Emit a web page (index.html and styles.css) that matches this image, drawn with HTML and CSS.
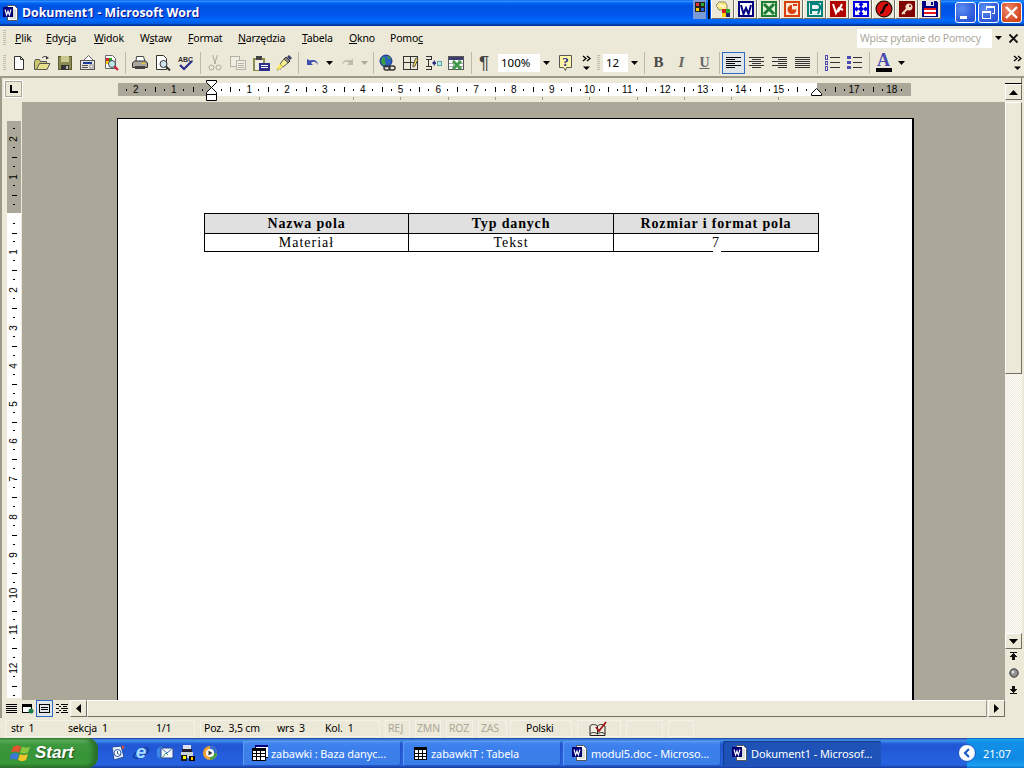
FILE: index.html
```html
<!DOCTYPE html>
<html lang="pl">
<head>
<meta charset="utf-8">
<title>Dokument1 - Microsoft Word</title>
<link rel="stylesheet" href="styles.css">
</head>
<body>
<svg class="sprite" width="0" height="0">
  <defs>
    <symbol id="doc-w" viewBox="0 0 16 16">
      <path d="M4.500.5h7l3 3v12h-10z" fill="#fff" stroke="#555"/><path d="M7 5h6M7 7h6M7 9h6M7 11h6M7 13h6" stroke="#bbb"/>
      <rect x=".5" y="2.500" width="9" height="9" fill="#000080" stroke="#000060"/>
      <path d="M2 4.500l1.600 5.500 1.400-4 1.400 4L8 4.500" fill="none" stroke="#fff" stroke-width="1.100"/>
    </symbol>
    <symbol id="arr-d" viewBox="0 0 7 4"><path d="M0 0h7L3.500 4z" fill="#000"/></symbol>
    <symbol id="arr-dg" viewBox="0 0 7 4"><path d="M0 0h7L3.500 4z" fill="#aca899"/></symbol>
    <symbol id="chev" viewBox="0 0 9 15"><path d="M1 1l3 2.500-3 2.500M5 1l3 2.500-3 2.500" fill="none" stroke="#000" stroke-width="1.300"/><path d="M1 11.500h7L4.500 15z" fill="#000"/></symbol>
  </defs>
</svg>
<div class="app">
  <header class="titlebar">
    <svg class="title-icon" width="16" height="16"><use href="#doc-w"/></svg>
    <span class="title-text">Dokument1 - Microsoft Word</span>
    <div class="ql-strip">
      <div class="ql-grip"><svg width="12" height="12" viewBox="0 0 12 12" shape-rendering="crispEdges"><rect x="1" y="1" width="10" height="10" fill="#222"/><rect x="2" y="2" width="3" height="3" fill="#e33"/><rect x="7" y="2" width="3" height="3" fill="#3a3"/><rect x="2" y="7" width="3" height="3" fill="#fc0"/><rect x="7" y="7" width="3" height="3" fill="#26d"/></svg></div>
      <div class="ql-bar"></div>
      <button class="ql-btn"><svg width="18" height="18" viewBox="0 0 18 18"><path d="M2 5l3-3h6l2 3v5H5z" fill="#ffe96e" stroke="#887"/><path d="M3 6h9M5 3l6 6" stroke="#fff"/><rect x="8" y="9" width="4" height="4" fill="#c22"/><rect x="12" y="9" width="4" height="4" fill="#2a2"/><rect x="8" y="13" width="4" height="4" fill="#fc0"/><rect x="12" y="13" width="4" height="4" fill="#227"/></svg></button>
      <button class="ql-btn"><svg width="18" height="18" viewBox="0 0 18 18" shape-rendering="crispEdges"><rect x="1" y="1" width="16" height="16" fill="#000080"/><rect x="3" y="3" width="12" height="12" fill="#fff"/><path d="M4 5l2.500 9 2.500-6 2.500 6L14 5" fill="none" stroke="#000080" stroke-width="2" shape-rendering="auto"/></svg></button>
      <button class="ql-btn"><svg width="18" height="18" viewBox="0 0 18 18" shape-rendering="crispEdges"><rect x="1" y="1" width="16" height="16" fill="#1e7d32"/><rect x="3" y="3" width="12" height="12" fill="#dff0d8"/><path d="M4 4l10 10M14 4L4 14" stroke="#1e7d32" stroke-width="3" shape-rendering="auto"/></svg></button>
      <button class="ql-btn"><svg width="18" height="18" viewBox="0 0 18 18" shape-rendering="crispEdges"><rect x="1" y="1" width="16" height="16" fill="#d9410b"/><rect x="3" y="3" width="12" height="12" fill="#ffe8d8"/><path d="M9 5a4.500 4.500 0 1 0 4.500 4.500H9z" fill="#d9410b" shape-rendering="auto"/><rect x="10" y="4" width="4" height="2" fill="#d9410b"/></svg></button>
      <button class="ql-btn"><svg width="18" height="18" viewBox="0 0 18 18" shape-rendering="crispEdges"><rect x="1" y="1" width="16" height="16" fill="#00807a"/><rect x="3" y="3" width="12" height="12" fill="#e8f4f0"/><path d="M5 14V4h6a3 3 0 0 1 0 6H5M12 14l3-8" fill="none" stroke="#00807a" stroke-width="2" shape-rendering="auto"/></svg></button>
      <button class="ql-btn"><svg width="18" height="18" viewBox="0 0 18 18" shape-rendering="crispEdges"><rect x="1" y="1" width="16" height="16" fill="#b00000"/><path d="M4 4l3 9 3-5 4 2M13 4l-4 8" fill="none" stroke="#fff" stroke-width="2" shape-rendering="auto"/></svg></button>
      <button class="ql-btn"><svg width="18" height="18" viewBox="0 0 18 18"><rect x="1" y="1" width="16" height="16" fill="#0000e0"/><path d="M3 3h5L6.500 4.500l2 2-2 2-2-2L3 8zM15 15h-5l1.500-1.500-2-2 2-2 2 2L15 10zM15 3v5l-1.500-1.500-2 2-2-2 2-2L10 3zM3 15v-5l1.500 1.500 2-2 2 2-2 2L8 15z" fill="#fff"/></svg></button>
      <button class="ql-btn"><svg width="18" height="18" viewBox="0 0 18 18"><circle cx="9" cy="9" r="8.500" fill="#000"/><circle cx="9" cy="9" r="7.500" fill="#d81010"/><path d="M5 13c3 0 3-2 4-5s2-3.500 4-3.500" fill="none" stroke="#000" stroke-width="2"/></svg></button>
      <button class="ql-btn"><svg width="18" height="18" viewBox="0 0 18 18"><rect x="1" y="1" width="16" height="16" fill="#800000"/><path d="M4 14l5-5" stroke="#f2dcc4" stroke-width="2"/><path d="M5 12l2 2" stroke="#f2dcc4" stroke-width="1.500"/><circle cx="11" cy="7" r="3.500" fill="#f2dcc4"/><circle cx="12" cy="6" r="1" fill="#800000"/></svg></button>
      <button class="ql-btn"><svg width="18" height="18" viewBox="0 0 18 18" shape-rendering="crispEdges"><path d="M1 1h14l2 2v14H1z" fill="#000080"/><rect x="5" y="1" width="8" height="5" fill="#e0e0f0"/><rect x="10" y="2" width="2" height="3" fill="#000080"/><rect x="3" y="8" width="12" height="2" fill="#e81818"/><rect x="3" y="10" width="12" height="2" fill="#fff"/><rect x="3" y="12" width="12" height="2" fill="#e81818"/><rect x="3" y="14" width="12" height="2" fill="#fff"/></svg></button>
    </div>
    <div class="win-buttons">
      <button class="win-btn"><svg width="21" height="21" viewBox="0 0 21 21" shape-rendering="crispEdges"><rect x="5" y="14" width="7" height="3" fill="#fff"/></svg></button>
      <button class="win-btn"><svg width="21" height="21" viewBox="0 0 21 21" fill="none" stroke="#fff" shape-rendering="crispEdges"><path d="M8.500 7.500V4.500h8v7h-3" stroke-width="1"/><path d="M8 5h8" stroke-width="2"/><rect x="4.500" y="9.500" width="8" height="7"/><path d="M4 10h9" stroke-width="2"/></svg></button>
      <button class="win-btn win-close"><svg width="21" height="21" viewBox="0 0 21 21"><path d="M5 5l11 11M16 5L5 16" stroke="#fff" stroke-width="2.400"/></svg></button>
    </div>
  </header>

  <nav class="menubar">
    <div class="grip"></div>
    <div class="menu-items">
      <span><u>P</u>lik</span><span><u>E</u>dycja</span><span><u>W</u>idok</span><span>W<u>s</u>taw</span><span><u>F</u>ormat</span><span><u>N</u>arzędzia</span><span><u>T</u>abela</span><span><u>O</u>kno</span><span>Pomo<u>c</u></span>
    </div>
    <div class="help-box"><span class="help-text">Wpisz pytanie do Pomocy</span><span class="combo-arrow"><svg width="7" height="4"><use href="#arr-d"/></svg></span></div>
    <svg class="doc-close" width="11" height="11" viewBox="0 0 11 11"><path d="M1.500 1.500l8 8M9.500 1.500l-8 8" stroke="#111" stroke-width="1.800"/></svg>
  </nav>

  <div class="toolbar">
    <div class="grip"></div>
    <button class="tb"><svg width="16" height="16" viewBox="0 0 16 16"><path d="M3.500 1.500h6l3 3v10h-9z" fill="#fff" stroke="#333"/><path d="M9.500 1.500v3h3" fill="none" stroke="#333"/></svg></button>
    <button class="tb"><svg width="18" height="16" viewBox="0 0 18 16"><path d="M1.500 6.500v8h12v-8h-6l-1-2h-4z" fill="#c9c66e" stroke="#555"/><path d="M3.500 14.500l3-6h10.500l-3 6z" fill="#e6e08c" stroke="#555"/><path d="M9 3c1.500-2 4-2 5.500 0" fill="none" stroke="#333"/><path d="M13 1l3 2-3 1.500z" fill="#333"/></svg></button>
    <button class="tb"><svg width="16" height="16" viewBox="0 0 16 16" shape-rendering="crispEdges"><path d="M1 1h14v14H1z" fill="#5a5a34"/><rect x="2" y="2" width="12" height="12" fill="#8d8b52"/><rect x="4" y="1" width="8" height="6" fill="#c9c88e"/><rect x="4" y="10" width="8" height="5" fill="#333"/><rect x="9" y="11" width="2" height="3" fill="#bbb"/></svg></button>
    <button class="tb"><svg width="18" height="16" viewBox="0 0 18 16"><path d="M4.500 5.500l5-5 5 5" fill="#fff" stroke="#666"/><rect x="1.500" y="5.500" width="14" height="9" fill="#e6e3d6" stroke="#555"/><rect x="4" y="7" width="9" height="2" fill="#1a3a9a"/><rect x="3" y="10" width="6" height="1" fill="#555"/><rect x="3" y="12" width="6" height="1" fill="#555"/><rect x="11" y="10" width="3" height="3" fill="#fff" stroke="#555" stroke-width=".6"/></svg></button>
    <button class="tb"><svg width="16" height="16" viewBox="0 0 16 16"><path d="M2.500 .5h7l3 3v10h-10z" fill="#fff" stroke="#666"/><rect x="3" y="3" width="3" height="3" fill="#d22"/><rect x="6" y="3" width="3" height="3" fill="#2a2"/><rect x="3" y="6" width="3" height="3" fill="#fc0"/><rect x="6" y="6" width="3" height="3" fill="#24c"/><circle cx="9" cy="9" r="3.500" fill="#bfe6e6" stroke="#445"/><path d="M11.500 11.500l3.500 3.500" stroke="#d01030" stroke-width="2"/></svg></button>
    <i class="sep"></i>
    <button class="tb"><svg width="18" height="16" viewBox="0 0 18 16"><path d="M5.500 1.500h7l1.500 5h-9z" fill="#fff" stroke="#444"/><path d="M1.500 8l2-2h11l2 2v4.500h-15z" fill="#a9a79b" stroke="#333"/><rect x="4" y="11" width="10" height="3" fill="#444"/><rect x="11" y="8" width="3" height="1" fill="#fc0"/></svg></button>
    <button class="tb"><svg width="16" height="16" viewBox="0 0 16 16"><path d="M1.500 .5h7l3 3v11h-10z" fill="#fff" stroke="#333"/><circle cx="8.500" cy="9" r="3.500" fill="#cfe4ee" stroke="#333"/><path d="M11 11.500l4 4" stroke="#333" stroke-width="2"/></svg></button>
    <button class="tb"><svg width="18" height="16" viewBox="0 0 18 16"><text x="1" y="6.500" class="abc">ABC</text><path d="M3 10l4 4 8-8" fill="none" stroke="#2d2d8a" stroke-width="2.200"/></svg></button>
    <i class="sep"></i>
    <button class="tb"><svg width="16" height="18" viewBox="0 0 16 18" fill="none" stroke="#aca899"><path d="M5.500 1l3 9M10.500 1l-3 9"/><circle cx="4.500" cy="13.500" r="2.500"/><circle cx="11.500" cy="13.500" r="2.500"/></svg></button>
    <button class="tb"><svg width="16" height="16" viewBox="0 0 16 16" fill="#f0eee2" stroke="#b4b2a4" shape-rendering="crispEdges"><rect x=".5" y="1.500" width="9" height="10"/><rect x="6.500" y="5.500" width="9" height="9"/><path d="M8 8.500h6M8 10.500h6M8 12.500h6"/></svg></button>
    <button class="tb"><svg width="18" height="18" viewBox="0 0 18 18" shape-rendering="crispEdges"><rect x="1" y="4" width="12" height="13" fill="#8d8b52"/><rect x="4" y="2" width="6" height="4" fill="#444"/><rect x="3" y="6" width="8" height="10" fill="#f0eee2"/><rect x="7" y="9" width="11" height="8" fill="#2d2d8a"/><rect x="9" y="11" width="7" height="1" fill="#fff"/><rect x="9" y="13" width="7" height="1" fill="#fff"/></svg></button>
    <button class="tb"><svg width="18" height="18" viewBox="0 0 18 18"><path d="M11 3l4 4-2 2-4-4z" fill="#8d8b7a" stroke="#333"/><path d="M14 1l3 3-2 2-3-3z" fill="#3d3d70"/><path d="M9 5l4 4-5 4-3-3z" fill="#f5ef90" stroke="#555"/><path d="M5 10l3 3-4 3-3-1z" fill="#ffef50"/><path d="M2 17l2-3M5 16l2-3" stroke="#999"/></svg></button>
    <i class="sep"></i>
    <button class="tb tb-undo"><svg width="16" height="14" viewBox="0 0 16 14"><path d="M2 3v6h6L6 7c2-2 5-1.500 7 2 0-4-4-6-8-4.500z" fill="#3f4cb0"/></svg></button>
    <button class="tb-drop"><svg width="7" height="4"><use href="#arr-d"/></svg></button>
    <button class="tb"><svg width="16" height="14" viewBox="0 0 16 14"><path d="M14 3v6H8l2-2C8 5 5 5.500 3 9c0-4 4-6 8-4.500z" fill="#bdbbae"/></svg></button>
    <button class="tb-drop"><svg width="7" height="4"><use href="#arr-dg"/></svg></button>
    <i class="sep"></i>
    <button class="tb"><svg width="18" height="18" viewBox="0 0 18 18"><circle cx="7" cy="7" r="6" fill="#2a5fc0" stroke="#1a2f80"/><path d="M3 4c2-2 4 0 3 2s2 3 0 5-3-2-4-3zM8 2c2 0 4 2 4 3s-2 0-3-1z" fill="#3aa03a"/><g fill="none" stroke="#333" stroke-width="1.400"><rect x="5" y="12" width="6" height="4" rx="2"/><rect x="10" y="12" width="6" height="4" rx="2"/></g></svg></button>
    <button class="tb"><svg width="16" height="16" viewBox="0 0 16 16" fill="none" stroke="#333" shape-rendering="crispEdges"><rect x=".5" y="1.500" width="14" height="13"/><path d="M7.500 1.500v13M.5 7.500h14"/><path d="M10 10l3-7 2 1-3 7-2 1z" fill="#ffe050" stroke="#555" shape-rendering="auto"/></svg></button>
    <button class="tb"><svg width="17" height="16" viewBox="0 0 17 16" fill="none" stroke="#333" shape-rendering="crispEdges"><path d="M.5 1.500h6v3h-6M.5 11.500h6v3h-6M3.500 4.500v7"/><path d="M8 8h3" stroke="#2d2d8a" stroke-width="2"/><path d="M7 8l3-3v6z" fill="#2d2d8a" stroke="none" shape-rendering="auto"/><rect x="12" y="6" width="4" height="4" fill="#bfe6e6" stroke="#5aa"/></svg></button>
    <button class="tb"><svg width="17" height="16" viewBox="0 0 17 16" shape-rendering="crispEdges"><rect x=".5" y="1.500" width="15" height="13" fill="#fff" stroke="#555"/><rect x="1" y="2" width="14" height="3" fill="#3d3d70"/><path d="M5.500 5v9M10.500 5v9M1 8.500h14M1 11.500h14" stroke="#aaa"/><path d="M5 6l8 8M13 6l-8 8" stroke="#3f9a4a" stroke-width="3" shape-rendering="auto"/></svg></button>
    <i class="sep"></i>
    <button class="tb tb-glyph para">¶</button>
    <div class="combo combo-zoom"><span>100%</span><span class="combo-arrow"><svg width="7" height="4"><use href="#arr-d"/></svg></span></div>
    <button class="tb tb-help"><svg width="18" height="18" viewBox="0 0 18 18"><path d="M2.500 1.500h12v12h-5l-1 3-2-3h-4z" fill="#fdf6a8" stroke="#555"/><text x="8.500" y="12" class="qm">?</text></svg></button>
    <button class="tb-more"><svg width="9" height="15"><use href="#chev"/></svg></button>
    <div class="grip grip-mid"></div>
    <div class="combo combo-size"><span>12</span><span class="combo-arrow"><svg width="7" height="4"><use href="#arr-d"/></svg></span></div>
    <i class="sep sep-fmt"></i>
    <button class="tb tb-glyph fmt-b">B</button>
    <button class="tb tb-glyph fmt-i">I</button>
    <button class="tb tb-glyph fmt-u">U</button>
    <i class="sep"></i>
    <button class="tb tb-active"><svg width="15" height="12" viewBox="0 0 15 12" stroke="#000" shape-rendering="crispEdges"><path d="M0 .5h15M0 2.500h9M0 4.500h15M0 6.500h9M0 8.500h15M0 10.500h9"/></svg></button>
    <button class="tb"><svg width="15" height="12" viewBox="0 0 15 12" stroke="#333" shape-rendering="crispEdges"><path d="M0 .5h15M3 2.500h9M0 4.500h15M3 6.500h9M0 8.500h15M3 10.500h9"/></svg></button>
    <button class="tb"><svg width="15" height="12" viewBox="0 0 15 12" stroke="#333" shape-rendering="crispEdges"><path d="M0 .5h15M6 2.500h9M0 4.500h15M6 6.500h9M0 8.500h15M6 10.500h9"/></svg></button>
    <button class="tb"><svg width="15" height="12" viewBox="0 0 15 12" stroke="#333" shape-rendering="crispEdges"><path d="M0 .5h15M0 2.500h15M0 4.500h15M0 6.500h15M0 8.500h15M0 10.500h15"/></svg></button>
    <i class="sep"></i>
    <button class="tb"><svg width="16" height="16" viewBox="0 0 16 16" shape-rendering="crispEdges"><path d="M6 2.500h10M6 7.500h10M6 12.500h10" stroke="#333"/><path d="M1 0h3v5H1zM1 6h3v4H1zM1 11h3v5H1z" fill="#4a4ab0"/><path d="M2 1h1v3H2zM2 7h1v2H2zM2 12h1v3H2z" fill="#ece9d8"/></svg></button>
    <button class="tb"><svg width="15" height="15" viewBox="0 0 15 15" shape-rendering="crispEdges"><path d="M6 2.500h9M6 7.500h9M6 12.500h9" stroke="#333"/><rect y="1" width="4" height="3" fill="#4a4ab0"/><rect y="6" width="4" height="3" fill="#4a4ab0"/><rect y="11" width="4" height="3" fill="#4a4ab0"/></svg></button>
    <i class="sep"></i>
    <button class="tb tb-color"><span class="color-a">A</span><span class="color-bar"></span></button>
    <button class="tb-drop"><svg width="7" height="4"><use href="#arr-d"/></svg></button>
    <button class="tb-more tb-end"><svg width="9" height="15"><use href="#chev"/></svg></button>
  </div>

  <div class="workspace">
    <div class="workmain">
      <div class="hruler-row">
        <div class="tab-box"><svg width="9" height="8" viewBox="0 0 9 8" shape-rendering="crispEdges"><path d="M1 0h2v6h6v2H1z" fill="#000"/></svg></div>
        <div class="hruler">
          <div class="ruler-nums"><span>2</span><span>1</span><span></span><span>1</span><span>2</span><span>3</span><span>4</span><span>5</span><span>6</span><span>7</span><span>8</span><span>9</span><span>10</span><span>11</span><span>12</span><span>13</span><span>14</span><span>15</span><span></span><span>17</span><span>18</span></div>
          <div class="tab-ticks"></div><div class="tab-tick-first"></div>
          <svg class="indent-left" width="11" height="21" viewBox="0 0 11 21" shape-rendering="crispEdges"><path d="M.5.500h10v2l-5 5-5-5zM5.500 7.500l5 5v2H.5v-2zM.5 14.500h10v6H.5z" fill="#fff" stroke="#000" shape-rendering="auto"/></svg>
          <svg class="indent-right" width="11" height="8" viewBox="0 0 11 8"><path d="M.5 7.500v-2l5-5 5 5v2z" fill="#fff" stroke="#000"/></svg>
        </div>
      </div>
      <div class="doc-row">
        <div class="vruler">
          <div class="vruler-nums"><span>2</span><span>1</span><span></span><span>1</span><span>2</span><span>3</span><span>4</span><span>5</span><span>6</span><span>7</span><span>8</span><span>9</span><span>10</span><span>11</span><span>12</span></div>
        </div>
        <main class="doc-area">
          <section class="page">
            <table class="fields">
              <thead><tr><th>Nazwa pola</th><th>Typ danych</th><th>Rozmiar i format pola</th></tr></thead>
              <tbody><tr><td>Materiał</td><td>Tekst</td><td class="cursor-cell">7<span class="line-gap"></span></td></tr></tbody>
            </table>
          </section>
        </main>
      </div>
      <div class="hscroll">
        <div class="view-btns">
          <button class="vb"><svg width="11" height="9" stroke="#000" shape-rendering="crispEdges"><path d="M0 .5h11M0 2.500h11M0 4.500h11M0 6.500h11M0 8.500h11"/></svg></button>
          <button class="vb vb-web"><svg width="12" height="10" viewBox="0 0 12 10" shape-rendering="crispEdges"><rect x=".5" y=".5" width="9" height="8" fill="#fff" stroke="#000"/><rect x="1" y="1" width="8" height="2" fill="#000"/><circle cx="9" cy="7" r="2.500" fill="#1c7d4a" shape-rendering="auto"/></svg></button>
          <button class="vb vb-on"><svg width="11" height="9" fill="none" stroke="#000" shape-rendering="crispEdges"><rect x=".5" y=".5" width="10" height="8"/><path d="M2 3.500h7M2 5.500h7"/></svg></button>
          <button class="vb vb-out"><svg width="12" height="9" stroke="#000" shape-rendering="crispEdges"><path d="M0 .5h3M5 .5h7M3 2.500h2M7 2.500h4M0 4.500h3M5 4.500h7M3 6.500h2M7 6.500h4M0 8.500h3M5 8.500h7"/></svg></button>
        </div>
        <button class="sb-btn sb-left"><svg width="5" height="9"><path d="M5 0v9L0 4.500z" fill="#000"/></svg></button>
        <div class="hs-track"></div>
        <button class="sb-btn"><svg width="5" height="9"><path d="M0 0v9l5-4.500z" fill="#000"/></svg></button>
      </div>
    </div>
    <aside class="vscroll">
      <div class="splitter"></div>
      <button class="sb-btn vs-btn"><svg width="9" height="5"><path d="M0 5h9L4.500 0z" fill="#000"/></svg></button>
      <div class="vs-thumb"></div>
      <div class="vs-track"></div>
      <button class="sb-btn vs-btn"><svg width="9" height="5"><path d="M0 0h9L4.500 5z" fill="#000"/></svg></button>
      <div class="nav-btns">
        <svg width="9" height="8" viewBox="0 0 9 8" shape-rendering="crispEdges"><path d="M1 0h7v1H1zM4 1h1v1H4zM3 2h3v1H3zM2 3h5v1H2zM1 4h7v1H1zM3 5h3v3H3z" fill="#111"/></svg>
        <svg width="10" height="10" viewBox="0 0 10 10"><circle cx="5" cy="5" r="4.200" fill="#8f8f8f" stroke="#333"/><circle cx="4" cy="4" r="1.500" fill="#ddd"/></svg>
        <svg width="9" height="8" viewBox="0 0 9 8" shape-rendering="crispEdges"><path d="M3 0h3v3H3zM1 3h7v1H1zM2 4h5v1H2zM3 5h3v1H3zM4 6h1v1H4zM1 7h7v1H1z" fill="#111"/></svg>
      </div>
    </aside>
  </div>

  <footer class="statusbar">
    <div class="st st-a"><span>str&nbsp; 1</span><span>sekcja&nbsp; 1</span><span>1/1</span></div>
    <div class="st st-b"><span>Poz.&nbsp; 3,5 cm</span><span>wrs&nbsp; 3</span><span>Kol.&nbsp; 1</span></div>
    <div class="st st-c st-off">REJ</div>
    <div class="st st-d st-off">ZMN</div>
    <div class="st st-e st-off">ROZ</div>
    <div class="st st-f st-off">ZAS</div>
    <div class="st st-g">Polski</div>
    <div class="st st-h"><svg width="19" height="15" viewBox="0 0 19 15"><path d="M1 5c2-2 5-2 7.500 0v8C6 11 3 11 1 13z" fill="#f2efe0" stroke="#222"/><path d="M8.500 5c2.500-2 5-2 7.500 0v8c-2.500-2-5-2-7.500 0z" fill="#f2efe0" stroke="#222"/><path d="M1 13v1.500h15V13" fill="none" stroke="#222"/><path d="M7 6l3 4 7-9" fill="none" stroke="#a01818" stroke-width="1.800"/></svg></div>
    <div class="st st-i"></div>
    <div class="st st-j"></div>
  </footer>

  <div class="taskbar">
    <button class="start"><svg width="24" height="23" viewBox="0 0 24 23"><path d="M3 5c3-2 5-2 8-.500l-2 6c-3-1.500-5-1.500-8 0z" fill="#e2542c"/><path d="M12 4.500c3 1.500 5 1.500 8 0l-2 6c-3 1.500-5 1.500-8 0z" fill="#8bc63e"/><path d="M1 12c3-1.500 5-1.500 8 0l-2 6c-3-1.500-5-1.500-8 0z" fill="#3c78d8"/><path d="M10 12c3 1.500 5 1.500 8 0l-2 6c-3 1.500-5 1.500-8 0z" fill="#f5c32c"/></svg><span>Start</span></button>
    <div class="tray-quick">
      <svg width="18" height="18" viewBox="0 0 18 18"><path d="M3 3l9-1 3 11-10 3z" fill="#e6eefa" stroke="#1f4a9a"/><circle cx="8.500" cy="9" r="3.500" fill="#fff" stroke="#2456a8"/><path d="M8.500 7v2.500l2 1" stroke="#2456a8" fill="none"/><path d="M13 1l3 3-3 1z" fill="#e85030"/></svg>
      <svg class="ie-icon" width="18" height="18" viewBox="0 0 18 18"><ellipse cx="9" cy="9" rx="8.500" ry="3.500" transform="rotate(-30 9 9)" fill="none" stroke="#0f3f9c" stroke-width="1.400"/><text x="9" y="14" class="ie">e</text></svg>
      <svg width="18" height="18" viewBox="0 0 18 18"><path d="M1 5l5-3v13l-5-2z" fill="#3f86e6"/><path d="M5 4h12v10H5z" fill="#f4f8fd" stroke="#27488c"/><path d="M5 4l6 5 6-5" fill="none" stroke="#3a6fc0"/><path d="M6 14l4-5 2 2" stroke="#38a068" fill="none"/></svg>
      <svg width="18" height="18" viewBox="0 0 18 18" shape-rendering="crispEdges"><rect x="4" y="1" width="8" height="4" fill="#dde"/><rect x="3" y="5" width="10" height="3" fill="#223"/><rect x="2" y="8" width="12" height="6" fill="#c8d0da"/><rect x="2" y="11" width="6" height="6" fill="#1c1c20"/><rect x="4" y="12" width="3" height="3" fill="#ff0"/><rect x="10" y="12" width="6" height="5" fill="#000"/><rect x="12" y="13" width="2" height="3" fill="#fc0"/></svg>
      <svg width="16" height="16" viewBox="0 0 16 16"><circle cx="8" cy="8" r="7" fill="#f0a030"/><path d="M8 1a7 7 0 0 1 7 7H8z" fill="#2f6fd0"/><path d="M15 8a7 7 0 0 1-7 7V8z" fill="#4aa040"/><circle cx="8" cy="8" r="4" fill="#fff"/><path d="M6.500 5.500l4 2.500-4 2.500z" fill="#333"/></svg>
    </div>
    <div class="tasks">
      <button class="task"><svg width="16" height="16" viewBox="0 0 16 16" shape-rendering="crispEdges"><rect x="3" y="0" width="13" height="12" fill="#fff" stroke="#000"/><rect x="3" y="0" width="13" height="2" fill="#000080"/><rect x="0" y="3" width="13" height="12" fill="#fff" stroke="#000"/><path d="M4 6v9M8 6v9M0 8h13M0 11h13" stroke="#000"/><rect x="0" y="3" width="13" height="3" fill="#000"/></svg><span>zabawki : Baza danyc...</span></button>
      <button class="task task-grid"><svg width="13" height="13" viewBox="0 0 13 13" shape-rendering="crispEdges"><rect x=".5" y=".5" width="12" height="12" fill="#fff" stroke="#000"/><rect y="0" width="13" height="3" fill="#000"/><path d="M4.500 3v9M8.500 3v9M0 6.500h13M0 9.500h13" stroke="#000"/></svg><span>zabawkiT : Tabela</span></button>
      <button class="task"><svg width="16" height="16"><use href="#doc-w"/></svg><span>modul5.doc - Microso...</span></button>
      <button class="task task-on"><svg width="16" height="16"><use href="#doc-w"/></svg><span>Dokument1 - Microsof...</span></button>
    </div>
    <div class="tray">
      <span class="tray-chev"><svg width="10" height="10" viewBox="0 0 10 10" fill="none" stroke="#1c5ac8" stroke-width="2.200"><path d="M7 1L3 5l4 4"/></svg></span>
      <span class="clock">21:07</span>
    </div>
  </div>
</div>
</body>
</html>
```

FILE: styles.css
```css
* { box-sizing: border-box; }
html, body { margin: 0; padding: 0; width: 1024px; height: 768px; overflow: hidden; }
body { font: 10.5px "Noto Sans", sans-serif; letter-spacing: -.2px; color: #000; background: #ece9d8; }
button { all: unset; box-sizing: border-box; display: flex; align-items: center; justify-content: center; flex: none; }
svg { display: block; flex: none; letter-spacing: 0; }
.sprite { position: absolute; }
.app { width: 1024px; height: 768px; display: flex; flex-direction: column; }

/* title bar */
.titlebar { height: 26px; flex: none; display: flex; align-items: flex-start; background: linear-gradient(#0058ee 0, #3593ff 4%, #288eff 6%, #127dff 8%, #036ffc 10%, #0262ee 14%, #0057e5 20%, #0054e3 24%, #0055eb 56%, #005bf5 66%, #026afe 76%, #0062ef 86%, #0052d6 92%, #0040ab 94%, #003092 100%); }
.title-icon { margin: 5px 0 0 3px; }
.title-text { margin: 4px 0 0 3px; color: #fff; font: bold 12.3px/18px "Open Sans", sans-serif; letter-spacing: 0; text-shadow: 1px 1px 0 #0f1089; white-space: nowrap; }
.ql-strip { margin-left: auto; display: flex; align-items: flex-start; height: 20px; }
.ql-grip { width: 13px; height: 19px; background: #7b9ad8; display: flex; justify-content: center; padding-top: 1px; }
.ql-bar { width: 2px; height: 19px; margin: 0 1px 0 2px; background: #000; }
.ql-btn { width: 23px; height: 19px; background: #ece9d8; border-right: 1px solid #716f64; border-bottom: 1px solid #716f64; border-left: 1px solid #fff; }
.ql-btn svg { width: 18px; height: 18px; }
.win-buttons { display: flex; gap: 2px; margin: 2px 2px 0 14px; }
.win-btn { width: 21px; height: 21px; border: 1px solid #fff; border-radius: 3px; background: radial-gradient(circle at 30% 30%, #5b8df2, #2a55d8 75%); }
.win-close { background: radial-gradient(circle at 35% 35%, #eb8a6c, #d4441c 75%); }

/* menu bar */
.menubar { height: 24px; flex: none; display: flex; align-items: center; padding-left: 3px; }
.grip { width: 3px; height: 16px; flex: none; background: repeating-linear-gradient(#c1bda9 0 1px, transparent 1px 2px); }
.menu-items { display: grid; grid-template-columns: 31px 48px 46px 48px 50px 64px 47px 41px 40px; margin-left: 9px; white-space: nowrap; }
.help-box { width: 147px; height: 19px; margin: 0 0 0 auto; background: #fff; display: flex; justify-content: space-between; align-items: stretch; color: #aca899; line-height: 18px; padding-left: 3px; }
.combo-arrow { width: 12px; background: #ece9d8; display: flex; align-items: center; justify-content: center; flex: none; }
.doc-close { margin: 0 5px 0 4px; }

/* toolbar */
.toolbar { height: 28px; flex: none; display: flex; align-items: center; padding-left: 3px; border-bottom: 2px solid #9d9a8a; padding-bottom: 1px; }
.tb { width: 23px; height: 22px; }
.tb-undo { width: 21px; margin-left: 1px; }
.tb-drop { width: 12px; height: 22px; }
.toolbar > .grip { margin-right: 1px; }
.sep { width: 6px; height: 22px; flex: none; background: linear-gradient(#bdbaa8, #bdbaa8) center / 1px 100% no-repeat; font-style: normal; }
.sep-fmt { margin-left: 1px; }
.tb-glyph { color: #4a4a4a; font-family: "Liberation Serif", serif; letter-spacing: 0; }
.para { font-size: 19px; color: #444; font-family: "Liberation Sans", sans-serif; padding-right: 3px; }
.fmt-b { font-weight: bold; font-size: 15px; }
.fmt-i { font-weight: bold; font-style: italic; font-size: 15px; color: #666; }
.fmt-u { font-weight: bold; font-size: 14px; text-decoration: underline; color: #666; }
.combo { height: 18px; background: #fff; display: flex; align-items: stretch; justify-content: space-between; line-height: 17px; flex: none; padding-left: 3px; font-size: 11.5px; letter-spacing: 0; }
.combo-zoom { width: 54px; margin-left: 1px; }
.combo-size { width: 37px; margin-left: 3px; }
.tb-help { margin-left: 2px; }
.tb-more { width: 17px; height: 22px; margin-left: 1px; }
.grip-mid { margin-left: 2px; }
.toolbar > .grip-mid { margin-right: 0; }
.tb-active { background: #e1e6e8; border: 1px solid #316ac5; }
.abc { font: bold 7px "Liberation Sans", sans-serif; fill: #333; }
.qm { font: bold 13px "Liberation Serif", serif; fill: #2d2d8a; text-anchor: middle; }
.tb-color { flex-direction: column; width: 23px; gap: 0; }
.color-a { font: bold 18px/15px "Liberation Serif", serif; color: #4a4ab0; letter-spacing: 0; }
.color-bar { width: 16px; height: 4px; background: #000; }
.tb-end { margin-left: auto; margin-right: -1px; width: 16px; }

/* workspace */
.workspace { flex: 1; min-height: 0; display: flex; border-left: 2px solid #9d9a8a; }
.workmain { width: 1003px; flex: none; display: flex; flex-direction: column; }
.hruler-row { height: 24px; flex: none; position: relative; padding: 5px 0 0 116px; }
.tab-box { position: absolute; left: 3px; top: 3px; width: 17px; height: 16px; background: #ece9d8; border: 1px solid #aca899; box-shadow: 0 0 0 1px #fff; display: flex; align-items: center; justify-content: center; }
.hruler { position: relative; width: 793px; height: 13px; background:
  repeating-linear-gradient(90deg, #000 0 1px, transparent 1px 37.8px) -1.1px 50% / 100% 5px no-repeat,
  repeating-linear-gradient(90deg, #000 0 1px, transparent 1px 18.9px) 8px 50% / 100% 2px no-repeat,
  linear-gradient(90deg, #aca899 93px, #fff 93px, #fff 699px, #aca899 699px); }
.ruler-nums { display: flex; margin-left: -1px; font: 10px/13px "Liberation Sans", sans-serif; letter-spacing: 0; }
.ruler-nums span { flex: 0 0 37.8px; text-align: center; }
.tab-ticks { position: absolute; left: 235px; top: 14px; width: 426px; height: 3px; background: repeating-linear-gradient(90deg, #a09d8c 0 1px, transparent 1px 47.25px); }
.tab-tick-first { position: absolute; left: 141px; top: 14px; width: 1px; height: 3px; background: #a09d8c; }
.indent-left { position: absolute; left: 88px; top: -3px; }
.indent-right { position: absolute; left: 693px; top: 5px; }

.doc-row { flex: 1; min-height: 0; display: flex; }
.vruler { width: 20px; flex: none; padding: 19px 1px 2px 5px; }
.vruler-nums { height: 100%; overflow: hidden; width: 14px; background:
  repeating-linear-gradient(#000 0 1px, transparent 1px 37.8px) 50% 36px / 5px 100% no-repeat,
  repeating-linear-gradient(#000 0 1px, transparent 1px 18.9px) 50% 7px / 2px 100% no-repeat,
  linear-gradient(#aca899 92px, #fff 92px); }
.vruler-nums span { display: flex; align-items: center; justify-content: center; height: 37.8px; font: 10px/14px "Liberation Sans", sans-serif; letter-spacing: 0; writing-mode: vertical-rl; transform: rotate(180deg); }
.vruler-nums span:first-child { margin-top: -1px; }
.doc-area { flex: 1; min-width: 0; overflow: hidden; background: #aca899; padding: 16px 0 0 95px; }
.page { width: 797px; height: 700px; background: #fff; border: solid #000; border-width: 1px 2px 0 1px; padding: 94px 0 0 86px; }
.fields { border-collapse: collapse; width: 615px; table-layout: fixed; font: 14px/17px "Liberation Serif", serif; letter-spacing: 1px; }
.fields th, .fields td { border: 1px solid #000; padding: 0; text-align: center; height: 18px; }
.fields th { background: #e0e0e0; font-weight: bold; height: 20px; letter-spacing: .85px; }
.fields th:nth-child(1) { width: 204px; }
.fields th:nth-child(2) { width: 205px; }
.cursor-cell { position: relative; }
.line-gap { position: absolute; left: 99px; bottom: -1px; width: 8px; height: 1px; background: #fff; }

.hscroll { height: 18px; flex: none; display: flex; align-items: stretch; padding-bottom: 1px; }
.view-btns { display: flex; }
.vb { width: 18px; }
.vb-web { width: 16px; }
.vb-on { width: 17px; border: 1px solid #316ac5; background: #e1e6e8; }
.vb-out { width: 17px; }
.sb-btn { width: 17px; background: #ece9d8; border: 1px solid; border-color: #fff #716f64 #716f64 #fff; }
.hs-track { flex: 1; border: 1px solid; border-color: #fff #9d9a8a #716f64 #fff; margin-right: 1px; }

.vscroll { width: 17px; flex: none; display: flex; flex-direction: column; margin-right: 2px; }
.splitter { height: 6px; border-bottom: 1px solid #000; border-right: 1px solid #716f64; flex: none; }
.vs-btn { width: 100%; height: 16px; }
.vs-thumb { height: 272px; margin-top: 2px; flex: none; border: 1px solid; border-color: #fff #716f64 #716f64 #fff; }
.vs-track { flex: 1; background: repeating-conic-gradient(#fff 0 25%, #ece9d8 0 50%) 0 0 / 2px 2px; }
.nav-btns { height: 69px; flex: none; display: flex; flex-direction: column; align-items: center; gap: 8px; padding-top: 3px; }

/* status bar */
.statusbar { height: 20px; flex: none; display: flex; padding: 2px 0 1px 5px; gap: 5px; white-space: nowrap; }
.st { height: 17px; border: 1px solid #f4f2e8; line-height: 15px; display: flex; justify-content: flex-start; padding-left: 5px; flex: none; }
.st-a { width: 190px; }
.st-a span:nth-child(1) { width: 57px; }
.st-a span:nth-child(2) { width: 88px; }
.st-b { width: 180px; padding-left: 3px; }
.st-b span:nth-child(1) { width: 73px; }
.st-b span:nth-child(2) { width: 48px; }
.st-off { color: #aca899; }
.st-c { width: 25px; padding-left: 2px; }
.st-d { width: 26px; padding-left: 1px; }
.st-e { width: 27px; padding-left: 2px; }
.st-f { width: 29px; padding-left: 2px; }
.st-g { width: 62px; margin-left: -2px; padding-left: 15px; }
.st-h { width: 44px; padding-left: 11px; }
.st-i { width: 37px; }
.st-j { width: 26px; }

/* task bar */
.taskbar { height: 30px; flex: none; display: flex; align-items: center; background: linear-gradient(#1f2f86 0, #3165c4 3%, #3682e5 6%, #4490e6 10%, #3883e5 12%, #2b71e0 15%, #2663da 18%, #235bd6 20%, #2258d5 23%, #2157d6 38%, #245ddb 54%, #2562df 86%, #245fdc 89%, #2158d4 92%, #1d4ec0 95%, #1941a5 98%); }
.start { width: 98px; height: 30px; padding: 0 0 0 10px; justify-content: flex-start; gap: 1px; border-radius: 0 11px 11px 0; background: linear-gradient(#3c8a40 0, #5eb05e 8%, #3e983e 22%, #379437 60%, #3a9a3a 85%, #2c6f2c 100%); box-shadow: inset -5px 0 5px #2a6e2a; color: #fff; font: italic bold 17px "Liberation Sans", sans-serif; letter-spacing: 0; text-shadow: 1px 1px 1px #1d4a1d; }
.start svg { width: 24px; height: 23px; }
.tray-quick { display: flex; align-items: center; width: 145px; padding-left: 11px; justify-content: space-between; padding-right: 25px; }
.ie-icon { overflow: visible; }
.ie { font: italic bold 19px "Liberation Sans", sans-serif; fill: #a8dcff; text-anchor: middle; }
.tasks { display: flex; gap: 2px; height: 25px; }
.task { width: 158px; height: 25px; padding-left: 9px; justify-content: flex-start; gap: 3px; color: #fff; font-size: 11px; letter-spacing: -.1px; border-radius: 2px; background: linear-gradient(#4c8bf0, #3c80ed 20%, #3a7de8); box-shadow: inset 1px 1px 0 #5f9bf5, inset -1px -1px 0 #2457c4; white-space: nowrap; overflow: hidden; }
.task-grid { padding-left: 11px; gap: 4px; }
.task-on { background: #1e52b7; box-shadow: inset 1px 1px 1px #103a88; }
.tray { margin-left: auto; width: 57px; height: 30px; position: relative; display: flex; align-items: center; padding-left: 16px; color: #fff; background: linear-gradient(#0c59b9 0, #139ee9 5%, #1290e8 15%, #0f8ae4 70%, #1a9ff0 92%, #0f6fc9 100%); }
.tray-chev { position: absolute; left: -9px; top: 6px; width: 18px; height: 18px; border-radius: 50%; background: radial-gradient(circle at 40% 35%, #fff 50%, #cfe0fa); border: 1px solid #1c5ac8; display: flex; align-items: center; justify-content: center; }
.clock { font-size: 11px; letter-spacing: 0; }
```
